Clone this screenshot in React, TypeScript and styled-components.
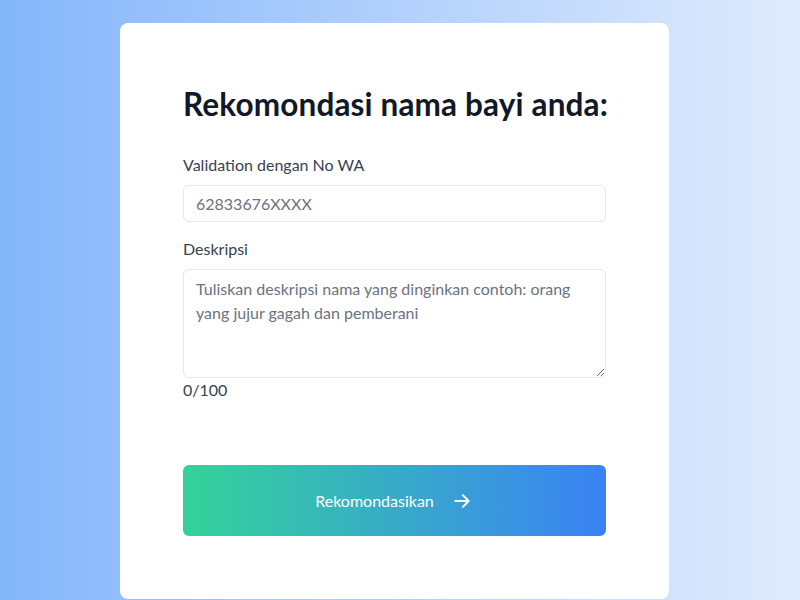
import React from "react";
import styled, { createGlobalStyle } from "styled-components";

const Global = createGlobalStyle`
  html, body { margin: 0; padding: 0; }
  body {
    font-family: Lato, "Noto Sans", sans-serif;
    background: linear-gradient(to right, #84b6fb, #e0ebfd);
    min-height: 600px;
  }
  * { box-sizing: border-box; }
`;

const Page = styled.div`
  min-height: 600px;
  display: flex;
  justify-content: center;
  padding-top: 23px;
  padding-right: 11px;
`;

const Card = styled.div`
  width: 549px;
  height: 576px;
  background: #fff;
  border-radius: 8px;
  padding: 61px 63px 0 63px;
  display: flex;
  flex-direction: column;
`;

const Title = styled.h1`
  margin: 0 0 29px 0;
  font-size: 31.5px;
  font-weight: 700;
  color: #111827;
  line-height: 40px;
  white-space: nowrap;
  letter-spacing: 0.15px;
`;

const Label = styled.label`
  display: block;
  font-size: 16px;
  color: #374151;
  line-height: 24px;
  margin-bottom: 8px;
`;

const Input = styled.input`
  width: 100%;
  height: 37px;
  border: 1px solid #e5e7eb;
  border-radius: 6px;
  padding: 0 12px;
  font-family: inherit;
  font-size: 16px;
  color: #111827;
  margin-bottom: 15px;
  &::placeholder { color: #6b7280; }
`;

const TextArea = styled.textarea`
  width: 100%;
  height: 109px;
  border: 1px solid #e5e7eb;
  border-radius: 6px;
  padding: 7px 12px;
  font-family: inherit;
  font-size: 16px;
  line-height: 24px;
  color: #111827;
  display: block;
  &::placeholder { color: #6b7280; }
`;

const Counter = styled.div`
  font-size: 16px;
  color: #374151;
  line-height: 24px;
`;

const Button = styled.button`
  margin-top: 63px;
  width: 100%;
  height: 71px;
  border: none;
  border-radius: 6px;
  background: linear-gradient(to right, #34d399, #3b82f6);
  color: #fff;
  font-family: inherit;
  font-size: 16px;
  display: flex;
  align-items: center;
  justify-content: center;
  gap: 18px;
  cursor: pointer;
  padding-left: 4px;
`;

export default function App() {
  return (
    <>
      <Global />
      <Page>
        <Card>
          <Title>Rekomondasi nama bayi anda:</Title>
          <Label>Validation dengan No WA</Label>
          <Input placeholder="62833676XXXX" />
          <Label>Deskripsi</Label>
          <TextArea placeholder="Tuliskan deskripsi nama yang dinginkan contoh: orang yang jujur gagah dan pemberani" />
          <Counter>0/100</Counter>
          <Button>
            <span>Rekomondasikan</span>
            <svg width="20" height="20" viewBox="0 0 24 24" fill="none" stroke="#fff" strokeWidth="2.4" strokeLinecap="round" strokeLinejoin="round">
              <path d="M4 12h15" />
              <path d="M13 5l7 7-7 7" />
            </svg>
          </Button>
        </Card>
      </Page>
    </>
  );
}
